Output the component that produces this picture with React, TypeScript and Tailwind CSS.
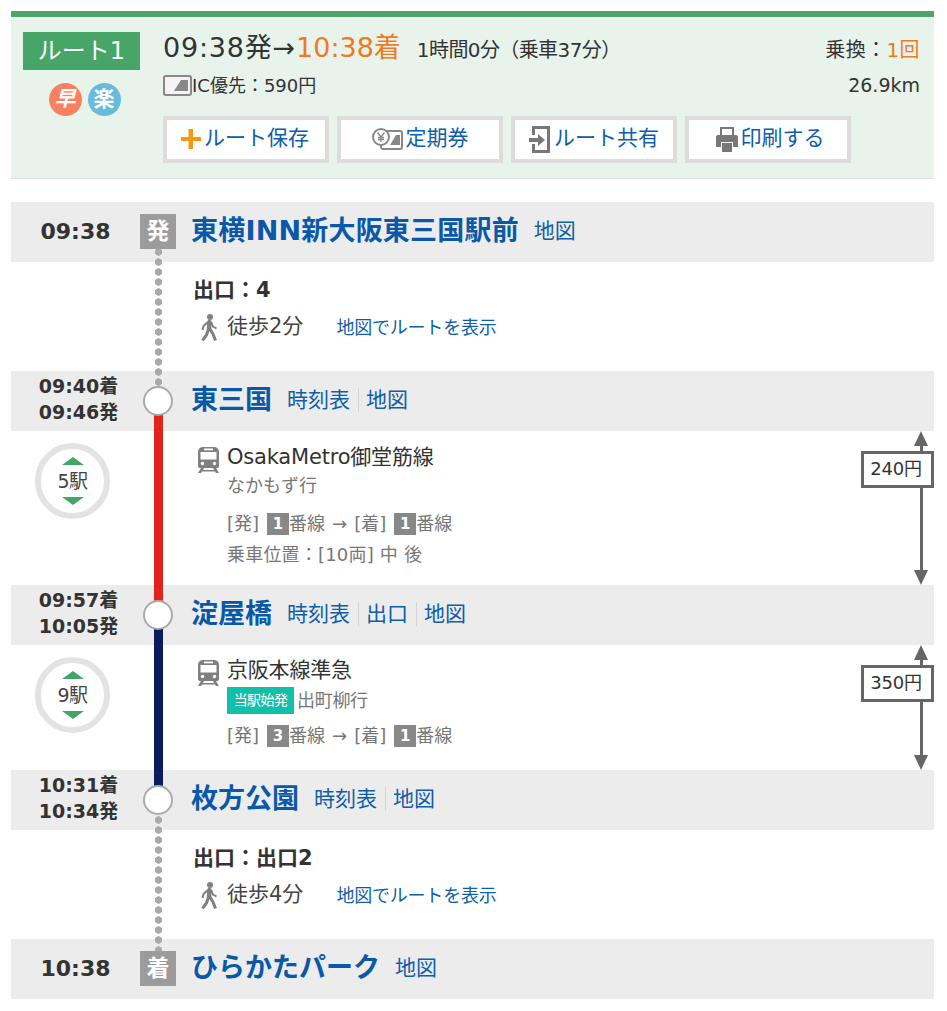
import React from "react";

const FONT = "font-['DejaVu_Sans','Noto_Sans_CJK_JP',sans-serif]";
const LINK = "text-[#0f5ea8]";

function IcCard() {
  return (
    <svg width="29" height="21" viewBox="0 0 29 21" className="shrink-0">
      <rect x="1" y="1" width="27" height="19" rx="2" fill="#f4f4f4" stroke="#888" strokeWidth="2" />
      <path d="M11 16 L18 5 H25 V16 Z" fill="#888" />
    </svg>
  );
}

function TeikiIcon() {
  return (
    <svg width="31" height="22" viewBox="0 0 31 22" className="shrink-0">
      <rect x="9" y="3" width="21" height="18" rx="2" fill="#fff" stroke="#888" strokeWidth="2" />
      <path d="M18 17 L24 7 H28 V17 Z" fill="#888" />
      <circle cx="9" cy="9" r="8" fill="#fff" stroke="#888" strokeWidth="2" />
      <path d="M5.5 4.500 L9 9 L12.500 4.500 M9 9 V14 M6 9.500 H12 M6 11.500 H12" stroke="#888" strokeWidth="1.300" fill="none" />
    </svg>
  );
}

function ShareIcon() {
  return (
    <svg width="22" height="27" viewBox="0 0 22 27" className="shrink-0">
      <path d="M3 0 H21 V27 H3 V18 H6 V24 H18 V3 H6 V9 H3 Z" fill="#777" />
      <path d="M0 12 H9 V8 L16 14 L9 20 V16 H0 Z" fill="#777" />
    </svg>
  );
}

function PrintIcon() {
  return (
    <svg width="22" height="25" viewBox="0 0 22 25" className="shrink-0">
      <path d="M4 0 H18 V8 H16 V2 H6 V8 H4 Z" fill="#777" />
      <path d="M2 8 H20 Q22 8 22 11 V20 H17 V15 H5 V20 H0 V11 Q0 8 2 8 Z" fill="#777" />
      <rect x="6" y="16" width="10" height="9" fill="#777" />
    </svg>
  );
}

function Walker() {
  return (
    <svg width="16" height="27" viewBox="0 0 16 27" className="shrink-0">
      <circle cx="9" cy="3" r="3" fill="#808080" />
      <path d="M8.500 8 L8 15" stroke="#808080" strokeWidth="4.500" strokeLinecap="round" fill="none" />
      <path d="M7 8 L2.500 12 L1.500 16" stroke="#808080" strokeWidth="2" fill="none" />
      <path d="M10 8 L12 12.500 L15.500 14.500" stroke="#808080" strokeWidth="2" fill="none" />
      <path d="M7.500 15 L5.500 21 L1.500 26.500" stroke="#808080" strokeWidth="3" fill="none" />
      <path d="M9 15 L12 20 L14.500 26.500" stroke="#808080" strokeWidth="3" fill="none" />
    </svg>
  );
}

function TrainIcon() {
  return (
    <svg width="23" height="27" viewBox="0 0 23 27" className="shrink-0">
      <path d="M5 1 H18 Q22 2 22 6 V20 Q22 22 19 22 H4 Q1 22 1 20 V6 Q1 2 5 1 Z" fill="#808080" />
      <rect x="3.500" y="6" width="16" height="7.500" fill="#fff" />
      <rect x="7" y="2.500" width="9" height="1.800" fill="#fff" />
      <circle cx="5.500" cy="17.500" r="1.700" fill="#fff" />
      <circle cx="17.500" cy="17.500" r="1.700" fill="#fff" />
      <path d="M1 27 L4 22 H7 L6 24 H17 L16 22 H19 L22 27 H19 L18 25.500 H5 L4 27 Z" fill="#808080" />
    </svg>
  );
}

function Button({ icon, label, extra = "" }: { icon: React.ReactNode; label: string; extra?: string }) {
  return (
    <div className={`flex h-[47px] w-[166px] items-center justify-center border-4 border-[#dcdcdc] bg-white text-[21px] ${LINK} ${extra}`}>
      {icon}
      <span className="ml-[3px]">{label}</span>
    </div>
  );
}

function Links({ items }: { items: string[] }) {
  return (
    <div className={`mb-[2px] ml-[15px] flex items-center text-[21px] ${LINK}`}>
      {items.map((t, i) => (
        <span key={t} className={i > 0 ? "ml-[8px] border-l border-[#d5d5d5] pl-[7px] leading-[24px]" : "leading-[24px]"}>
          {t}
        </span>
      ))}
    </div>
  );
}

function Station({
  time,
  second,
  marker,
  name,
  links,
  lineTop,
  lineBottom,
  nameClass = "",
}: {
  time: string;
  second?: string;
  marker: "発" | "着" | "circle";
  name: string;
  links: string[];
  lineTop?: React.ReactNode;
  lineBottom?: React.ReactNode;
  nameClass?: string;
}) {
  return (
    <div className="flex h-[60px] items-center bg-[#ececec]">
      <div className="flex w-[129px] flex-col items-center justify-center font-bold text-[#333]">
        {second ? (
          <div className="flex flex-col items-center pb-[5px] pl-[6px]">
            <span className="text-[19px] leading-[26px]">{time}</span>
            <span className="text-[19px] leading-[26px]">{second}</span>
          </div>
        ) : (
          <span className="text-[22px] leading-[26px]">{time}</span>
        )}
      </div>
      <div className="relative flex h-[60px] w-[36px] shrink-0 items-center justify-center">
        {lineTop}
        {lineBottom}
        {marker === "circle" ? (
          <div className="relative h-[30px] w-[30px] rounded-full border-2 border-[#aaa] bg-white" />
        ) : (
          <div className="relative -mt-[2px] flex h-[35px] w-[36px] items-center justify-center bg-[#9b9b9b] text-[23px] font-bold text-white">
            {marker}
          </div>
        )}
      </div>
      <div className={`mb-[2px] ml-[15px] text-[27px] font-bold text-[#0a58a8] ${nameClass}`}>{name}</div>
      <Links items={links} />
    </div>
  );
}

const DOTS = "bg-[radial-gradient(circle,#aaaaaa_3.4px,transparent_4px)] bg-[length:9px_10px] bg-repeat-y";

function Walk({ exit, mins }: { exit: string; mins: string }) {
  return (
    <div className="relative h-[109px] bg-white">
      <div className={`absolute bottom-0 left-[143px] top-0 w-[9px] bg-[position:0_-5px] ${DOTS}`} />
      <div className="ml-[182px] pt-[13px]">
        <div className="text-[21px] font-bold leading-[30px] text-[#333]">{exit}</div>
        <div className="mt-[8px] flex items-center">
          <div className="ml-[8px] mr-[10px]">
            <Walker />
          </div>
          <span className="-mt-[2px] text-[21px] text-[#444]">{mins}</span>
          <span className={`ml-[33px] text-[18px] tracking-[-0.2px] ${LINK}`}>地図でルートを表示</span>
        </div>
      </div>
    </div>
  );
}

function Count({ n }: { n: string }) {
  return (
    <div className="flex h-[76px] w-[75px] flex-col items-center justify-center rounded-full border-[6px] border-[#e3e3e3] bg-white">
      <div className="h-0 w-0 border-x-[11px] border-b-[8px] border-x-transparent border-b-[#43a566]" />
      <div className="my-[3px] text-[19px] leading-[26px] tracking-[-0.5px] text-[#444]">{n}</div>
      <div className="h-0 w-0 border-x-[11px] border-t-[8px] border-x-transparent border-t-[#43a566]" />
    </div>
  );
}

function Num({ n }: { n: string }) {
  return (
    <span className="ml-[8px] inline-flex h-[22px] w-[22px] items-center justify-center bg-[#888] text-[15px] font-bold text-white">
      {n}
    </span>
  );
}

function Fare({ price }: { price: string }) {
  return (
    <div className="absolute bottom-0 right-0 top-0 w-[73px]">
      <div className="absolute bottom-[9px] left-[59px] top-[9px] w-[3px] bg-[#666]" />
      <div className="absolute left-[53px] top-0 h-0 w-0 border-x-[7px] border-b-[15px] border-x-transparent border-b-[#666]" />
      <div className="absolute bottom-0 left-[53px] h-0 w-0 border-x-[7px] border-t-[15px] border-x-transparent border-t-[#666]" />
      <div className="absolute left-0 top-[20px] flex h-[37px] w-[73px] items-center justify-center border-[3px] border-[#666] bg-white pb-[2px] pr-[3px] text-[18px] tracking-[-0.2px] text-[#333]">
        {price}
      </div>
    </div>
  );
}

function Platforms({ from, to }: { from: string; to: string }) {
  return (
    <>
      [発]
      <Num n={from} />
      番線
      <span className="mx-[7px]">→</span>
      [着]
      <Num n={to} />
      番線
    </>
  );
}

function Segment({
  height,
  count,
  color,
  children,
  price,
  countTop,
}: {
  height: string;
  count: string;
  color: string;
  children: React.ReactNode;
  price: string;
  countTop: string;
}) {
  return (
    <div className={`relative bg-white ${height}`}>
      <div className={`absolute bottom-0 left-[143px] top-0 w-[9px] ${color}`} />
      <div className={`absolute left-[24px] ${countTop}`}>
        <Count n={count} />
      </div>
      <Fare price={price} />
      {children}
    </div>
  );
}

function LineTitle({ text }: { text: string }) {
  return (
    <div className="flex items-start">
      <div className="ml-[186px] mr-[7px] mt-[2px]">
        <TrainIcon />
      </div>
      <div className="text-[21px] leading-[26px] tracking-[-0.2px] text-[#333]">{text}</div>
    </div>
  );
}

export default function App() {
  return (
    <div className={`min-h-[1011px] bg-white pl-[11px] pr-[13px] pt-[11px] ${FONT}`}>
      <div className="h-[168px] border-b border-t-[6px] border-b-[#dcdfdc] border-t-[#4ba56c] bg-[#e8f4eb]">
        <div className="flex">
          <div className="ml-[12px] mt-[15px] w-[117px]">
            <div className="flex h-[38px] items-center justify-center bg-[#48a568] text-[24px] text-white">ルート1</div>
            <div className="mt-[13px] flex justify-center gap-[6px] pl-[6px] text-[21px] font-bold leading-[33px] text-white">
              <span className="h-[33px] w-[33px] rounded-full bg-[#f98160] text-center italic">早</span>
              <span className="h-[33px] w-[33px] rounded-full bg-[#68bbdb] text-center">楽</span>
            </div>
          </div>
          <div className="ml-[23px] flex-1 pr-[14px] pt-[13px]">
            <div className="flex items-baseline justify-between">
              <div className="flex items-baseline text-[#333]">
                <span className="text-[27px] leading-[36px] tracking-[0.8px]">09:38発→</span>
                <span className="text-[27px] leading-[36px] text-[#f07a1c]">10:38着</span>
                <span className="ml-[16px] text-[20px] tracking-[-0.6px]">1時間0分（乗車37分）</span>
              </div>
              <div className="text-[20px] tracking-[0.4px] text-[#333]">
                乗換：<span className="text-[#f07a1c]">1回</span>
              </div>
            </div>
            <div className="mt-[5px] flex items-center justify-between text-[#333]">
              <div className="flex items-center text-[18px]">
                <IcCard />
                <span>IC優先：590円</span>
              </div>
              <div className="text-[19px]">26.9km</div>
            </div>
            <div className="mt-[16px] flex gap-[8px]">
              <Button
                label="ルート保存"
                extra="pr-[2px]"
                icon={
                  <svg width="20" height="20" viewBox="0 0 20 20" className="shrink-0">
                    <path d="M7.500 0 H12 V8 H20 V12 H12 V20 H7.500 V12 H0 V8 H7.500 Z" fill="#f39a12" />
                  </svg>
                }
              />
              <Button label="定期券" icon={<TeikiIcon />} />
              <Button label="ルート共有" icon={<ShareIcon />} />
              <Button label="印刷する" extra="pl-[4px]" icon={<PrintIcon />} />
            </div>
          </div>
        </div>
      </div>

      <div className="mt-[23px]">
        <Station
          time="09:38"
          marker="発"
          name="東横INN新大阪東三国駅前"
          nameClass="tracking-[0.2px]"
          links={["地図"]}
          lineBottom={<div className={`absolute bottom-0 left-[14px] h-[13px] w-[9px] bg-[position:0_-2px] ${DOTS}`} />}
        />
        <Walk exit="出口：4" mins="徒歩2分" />
        <Station
          time="09:40着"
          second="09:46発"
          marker="circle"
          name="東三国"
          links={["時刻表", "地図"]}
          lineTop={<div className={`absolute left-[14px] top-0 h-[16px] w-[9px] bg-[position:0_-4px] ${DOTS}`} />}
          lineBottom={<div className="absolute bottom-0 left-[14px] h-[16px] w-[9px] bg-[#e0241b]" />}
        />
        <Segment height="h-[154px]" count="5駅" color="bg-[#e0241b]" price="240円" countTop="top-[12px]">
          <div className="pt-[13px]">
            <LineTitle text="OsakaMetro御堂筋線" />
            <div className="ml-[216px] text-[18px] leading-[26px] text-[#777]">なかもず行</div>
            <div className="ml-[216px] mt-[12px] flex items-center text-[18px] leading-[26px] text-[#777]">
              <Platforms from="1" to="1" />
            </div>
            <div className="ml-[216px] mt-[5px] text-[18px] leading-[26px] tracking-[0.2px] text-[#777]">乗車位置：[10両] 中 後</div>
          </div>
        </Segment>
        <Station
          time="09:57着"
          second="10:05発"
          marker="circle"
          name="淀屋橋"
          links={["時刻表", "出口", "地図"]}
          lineTop={<div className="absolute left-[14px] top-0 h-[16px] w-[9px] bg-[#e0241b]" />}
          lineBottom={<div className="absolute bottom-0 left-[14px] h-[16px] w-[9px] bg-[#0b1c5e]" />}
        />
        <Segment height="h-[125px]" count="9駅" color="bg-[#0b1c5e]" price="350円" countTop="top-[12px]">
          <div className="pt-[12px]">
            <LineTitle text="京阪本線準急" />
            <div className="ml-[216px] mt-[1px] flex items-center text-[18px] leading-[27px] tracking-[-0.3px] text-[#777]">
              <span className="mr-[3px] flex h-[27px] w-[67px] items-center justify-center bg-[#12bfa9] text-[14px] tracking-[-0.6px] text-white">当駅始発</span>
              出町柳行
            </div>
            <div className="ml-[216px] mt-[9px] flex items-center text-[18px] leading-[26px] text-[#777]">
              <Platforms from="3" to="1" />
            </div>
          </div>
        </Segment>
        <Station
          time="10:31着"
          second="10:34発"
          marker="circle"
          name="枚方公園"
          links={["時刻表", "地図"]}
          lineTop={<div className="absolute left-[14px] top-0 h-[16px] w-[9px] bg-[#0b1c5e]" />}
          lineBottom={<div className={`absolute bottom-0 left-[14px] h-[14px] w-[9px] bg-[position:0_-1px] ${DOTS}`} />}
        />
        <Walk exit="出口：出口2" mins="徒歩4分" />
        <Station
          time="10:38"
          marker="着"
          name="ひらかたパーク"
          links={["地図"]}
          lineTop={<div className={`absolute left-[14px] top-0 h-[14px] w-[9px] bg-[position:0_-4px] ${DOTS}`} />}
        />
      </div>
    </div>
  );
}
